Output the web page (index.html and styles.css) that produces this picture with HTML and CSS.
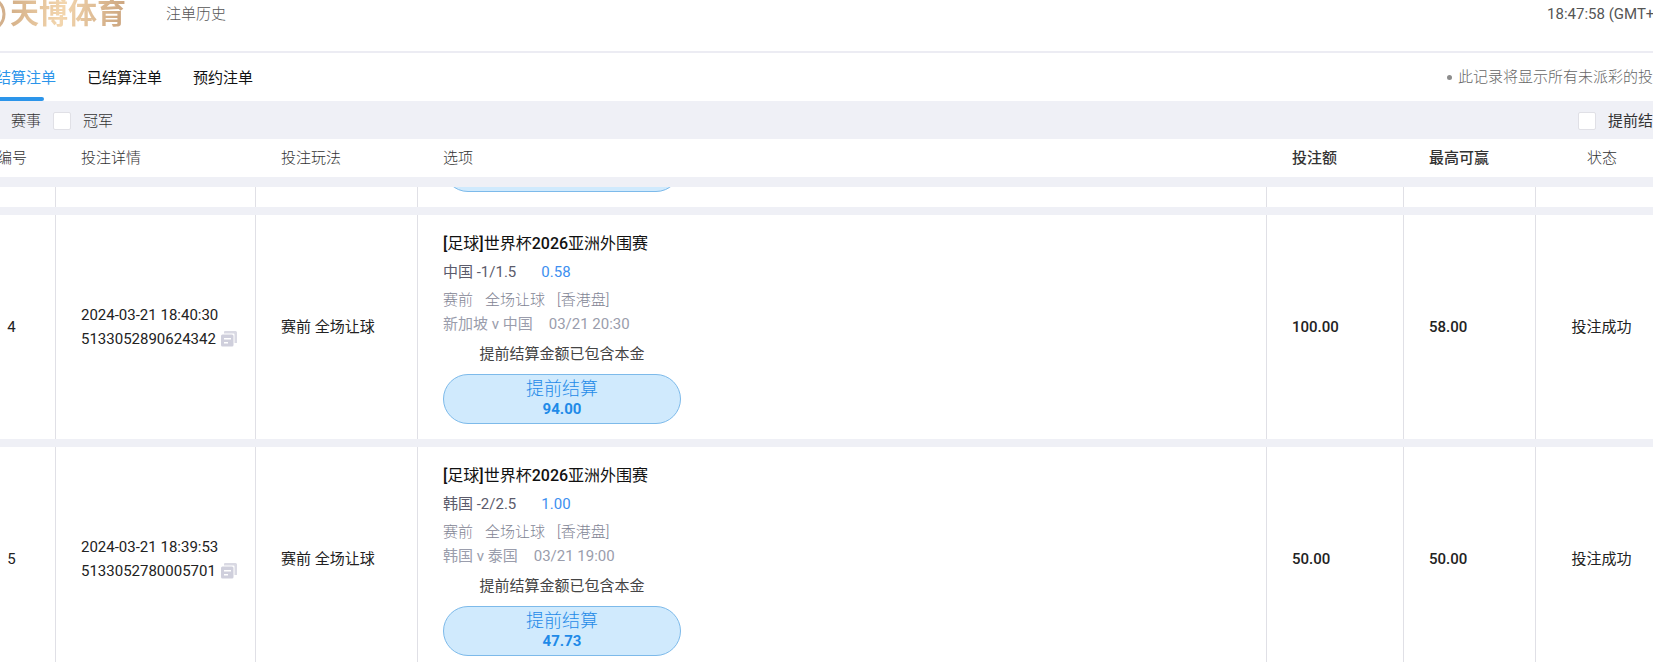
FILE: index.html
```html
<!DOCTYPE html>
<html lang="zh-CN">
    <head>
        <meta charset="utf-8">
        <title>注单历史</title>
        <link rel="stylesheet" href="styles.css">
    </head>
    <body>
        <div class="page">
            <header class="header">
                <div class="logo">
                    <svg class="logo-ring" width="40" height="40" viewBox="0 0 40 40" aria-hidden="true">
                        <circle cx="19" cy="20" r="17" fill="none" stroke="#d3b08c" stroke-width="3"/>
                    </svg>
                    <span class="logo-text">天博体育</span>
                </div>
                <h1 class="title">注单历史</h1>
                <span class="clock">18:47:58 (GMT+8)</span>
            </header>

            <nav class="tabs">
                <a class="tab active" href="#">未结算注单</a>
                <a class="tab" href="#">已结算注单</a>
                <a class="tab" href="#">预约注单</a>
                <span class="tip">此记录将显示所有未派彩的投注</span>
            </nav>

            <div class="filter">
                <label class="check"><input type="checkbox">赛事</label>
                <label class="check"><input type="checkbox">冠军</label>
                <label class="check last"><input type="checkbox">提前结算</label>
            </div>

            <table class="bets bets-head">
                <colgroup>
                    <col class="c-no"><col class="c-detail"><col class="c-play"><col>
                    <col class="c-stake"><col class="c-win"><col class="c-status">
                </colgroup>
                <thead>
                    <tr>
                        <th class="center">编号</th>
                        <th>投注详情</th>
                        <th>投注玩法</th>
                        <th>选项</th>
                        <th class="money">投注额</th>
                        <th class="money">最高可赢</th>
                        <th class="center">状态</th>
                    </tr>
                </thead>
            </table>

            <!-- scrolled list -->
            <div class="list">
                <table class="bets bets-body">
                    <colgroup>
                        <col class="c-no"><col class="c-detail"><col class="c-play"><col>
                        <col class="c-stake"><col class="c-win"><col class="c-status">
                    </colgroup>
                    <tbody>
                        <tr>
                            <td></td>
                            <td></td>
                            <td></td>
                            <td class="option"><button class="cashout" type="button" aria-label="提前结算"></button></td>
                            <td></td>
                            <td></td>
                            <td></td>
                        </tr>
                        <tr>
                            <td class="center">4</td>
                            <td>
                                <div class="line">2024-03-21 18:40:30</div>
                                <div class="line order">5133052890624342
                                    <button class="copy" type="button" aria-label="复制">
                                        <svg width="16" height="16" viewBox="0 0 16 16">
                                            <path d="M4 0h10.500a1.500 1.500 0 0 1 1.500 1.500V12h-2.500V3.500a1 1 0 0 0-1-1H3V1a1 1 0 0 1 1-1z" fill="#d9d9e3"/>
                                            <path d="M1.500 3.500h9.500a1.500 1.500 0 0 1 1.500 1.500v9a1.500 1.500 0 0 1-1.500 1.500H1.500A1.500 1.500 0 0 1 0 14V5a1.500 1.500 0 0 1 1.500-1.500zM3 7v1.500h7V7zM3 11v1.500h4V11z" fill="#cfcfdc" fill-rule="evenodd"/>
                                        </svg>
                                    </button>
                                </div>
                            </td>
                            <td>赛前 全场让球</td>
                            <td class="option">
                                <div class="league"><b>[</b>足球<b>]</b>世界杯<b>2026</b>亚洲外围赛</div>
                                <div class="pick"><span>中国 -1/1.5</span><span class="odds">0.58</span></div>
                                <div class="market"><span>赛前</span><span>全场让球</span><span>[香港盘]</span></div>
                                <div class="match"><span>新加坡 v 中国</span><span>03/21 20:30</span></div>
                                <div class="note">提前结算金额已包含本金</div>
                                <button class="cashout" type="button">提前结算<b>94.00</b></button>
                            </td>
                            <td class="money">100.00</td>
                            <td class="money">58.00</td>
                            <td class="center">投注成功</td>
                        </tr>
                        <tr>
                            <td class="center">5</td>
                            <td>
                                <div class="line">2024-03-21 18:39:53</div>
                                <div class="line order">5133052780005701
                                    <button class="copy" type="button" aria-label="复制">
                                        <svg width="16" height="16" viewBox="0 0 16 16">
                                            <path d="M4 0h10.500a1.500 1.500 0 0 1 1.500 1.500V12h-2.500V3.500a1 1 0 0 0-1-1H3V1a1 1 0 0 1 1-1z" fill="#d9d9e3"/>
                                            <path d="M1.500 3.500h9.500a1.500 1.500 0 0 1 1.500 1.500v9a1.500 1.500 0 0 1-1.500 1.500H1.500A1.500 1.500 0 0 1 0 14V5a1.500 1.500 0 0 1 1.500-1.500zM3 7v1.500h7V7zM3 11v1.500h4V11z" fill="#cfcfdc" fill-rule="evenodd"/>
                                        </svg>
                                    </button>
                                </div>
                            </td>
                            <td>赛前 全场让球</td>
                            <td class="option">
                                <div class="league"><b>[</b>足球<b>]</b>世界杯<b>2026</b>亚洲外围赛</div>
                                <div class="pick"><span>韩国 -2/2.5</span><span class="odds">1.00</span></div>
                                <div class="market"><span>赛前</span><span>全场让球</span><span>[香港盘]</span></div>
                                <div class="match"><span>韩国 v 泰国</span><span>03/21 19:00</span></div>
                                <div class="note">提前结算金额已包含本金</div>
                                <button class="cashout" type="button">提前结算<b>47.73</b></button>
                            </td>
                            <td class="money">50.00</td>
                            <td class="money">50.00</td>
                            <td class="center">投注成功</td>
                        </tr>
                    </tbody>
                </table>
            </div>
        </div>
    </body>
</html>
```

FILE: styles.css
```css
* {
    box-sizing: border-box;
}

body {
    margin: 0;
    height: 100vh;
    overflow: hidden;
    background: #eff0f6;
    font-family: Roboto, "Noto Sans CJK SC", sans-serif;
    font-size: 15px;
    line-height: 24px;
    color: #222;
}

button {
    font-family: inherit;
    cursor: pointer;
}

/* the page is wider and taller than the window */
.page {
    margin: -24px -15px 0 -32px;
}

.header {
    display: flex;
    align-items: center;
    height: 77px;
    background: #fff;
    border-bottom: 2px solid #ececf3;
    color: #555;
}

.logo {
    display: flex;
    align-items: center;
    gap: 2px;
    width: 198px;
}

.logo-text {
    font-size: 29px;
    line-height: 40px;
    font-weight: 700;
    background: linear-gradient(100deg, #d3ae86, #f3d6ae 45%, #c9a27c);
    -webkit-background-clip: text;
    background-clip: text;
    color: transparent;
}

.title {
    margin: 0;
    font-size: 15px;
    font-weight: 300;
}

.clock {
    margin-left: auto;
}

.tabs {
    display: flex;
    gap: 31px;
    height: 48px;
    padding-left: 13px;
    background: #fff;
    line-height: 50px;
    white-space: nowrap;
}

.tab {
    position: relative;
    color: #111;
    text-decoration: none;
}

.tab.active {
    color: #2c95ea;
}

.tab.active::after {
    content: "";
    position: absolute;
    left: 12px;
    right: 12px;
    bottom: 0;
    height: 4px;
    border-radius: 2px;
    background: #2c95ea;
}

.tip {
    display: flex;
    align-items: center;
    gap: 6px;
    margin-left: auto;
    font-weight: 300;
    color: #666;
}

.tip::before {
    content: "";
    width: 5px;
    height: 5px;
    border-radius: 50%;
    background: #8c8c8c;
}

.filter {
    display: flex;
    align-items: center;
    gap: 12px;
    height: 38px;
    padding-top: 2px;
    padding-left: 13px;
    color: #333;
}

.check {
    display: flex;
    align-items: center;
    gap: 12px;
    font-weight: 300;
}

.check.last {
    margin-left: auto;
    font-weight: 400;
}

.check input {
    appearance: none;
    width: 18px;
    height: 18px;
    margin: 0;
    background: #fff;
    border: 1px solid #e0e0e6;
    border-radius: 2px;
}

.bets {
    width: 100%;
    table-layout: fixed;
    border-spacing: 0;
}

.c-no { width: 88px; }
.c-detail { width: 200px; }
.c-play { width: 162px; }
.c-stake { width: 137px; }
.c-win { width: 132px; }
.c-status { width: 132px; }

.bets th,
.bets td {
    padding: 0 0 0 25px;
    background: #fff;
    text-align: left;
}

.bets th {
    height: 38px;
    font-weight: 300;
    color: #333;
}

.bets .center {
    padding: 0;
    text-align: center;
}

.bets .money {
    font-weight: 500;
}

.list {
    margin-top: 10px;
    overflow: hidden;
}

.bets-body {
    margin-top: -212px;
    border-spacing: 0 8px;
}

.bets td {
    height: 224px;
    border-right: 1px solid #e0e0e6;
}

.bets .option {
    padding-top: 15px;
    padding-bottom: 15px;
    vertical-align: bottom;
}

.order {
    display: flex;
    align-items: center;
    gap: 5px;
}

.copy {
    display: flex;
    padding: 0;
    border: 0;
    background: none;
}

.league {
    font-size: 16px;
    line-height: 28px;
    color: #111;
}

.league b {
    font-weight: 500;
}

.pick,
.market,
.match {
    display: flex;
    line-height: 28px;
}

.pick {
    gap: 25px;
    color: #5b5b6b;
}

.odds {
    color: #3d8ff0;
}

.market {
    gap: 12px;
    font-weight: 300;
    color: #7f8494;
}

.match {
    gap: 16px;
    line-height: 20px;
    color: #9a9dac;
}

.note {
    width: 238px;
    margin: 8px 0;
    text-align: center;
    color: #444;
}

.cashout {
    display: block;
    width: 238px;
    height: 50px;
    padding: 0 0 2px;
    border: 1px solid #7dbaea;
    border-radius: 25px;
    background: #d0eafd;
    font-size: 18px;
    line-height: 22px;
    font-weight: 300;
    color: #1f8ae8;
}

.cashout b {
    display: block;
    font-size: 15px;
    line-height: 18px;
    font-weight: 700;
}
```
